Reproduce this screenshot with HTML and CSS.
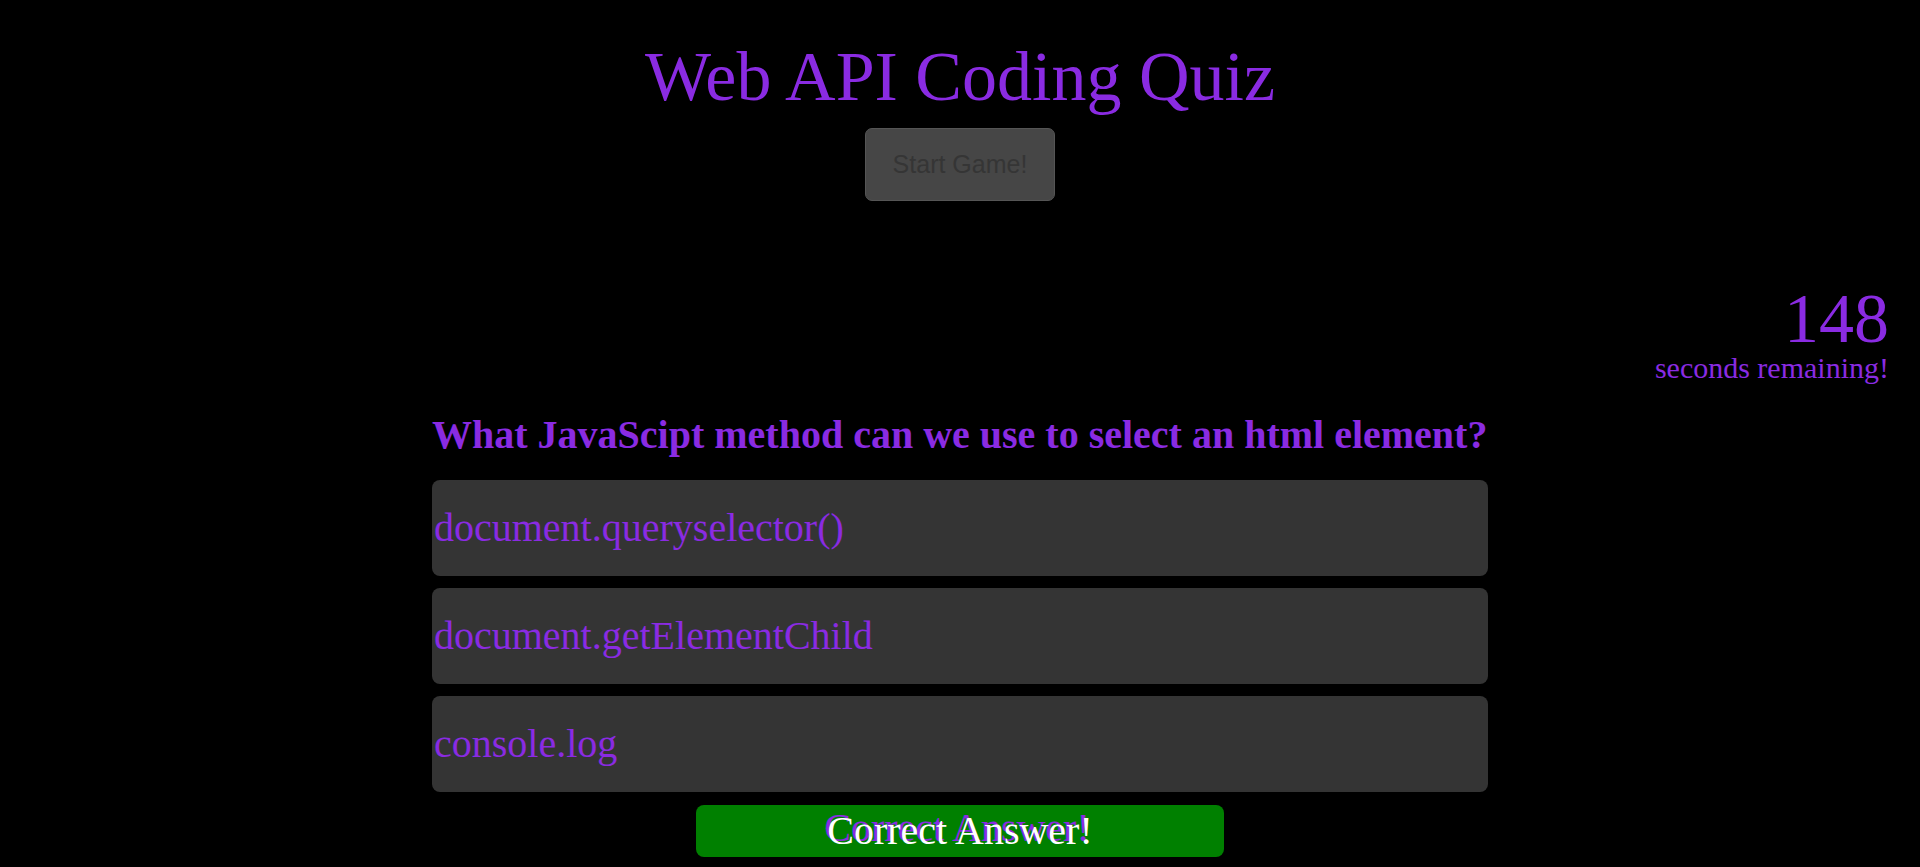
FILE: index.html
```html
<!DOCTYPE html>
<html lang="en">
<head>
<meta charset="utf-8">
<title>Web API Coding Quiz</title>
<link rel="stylesheet" href="styles.css">
</head>
<body>
<header class="header">
  <h1 class="title">Web API Coding Quiz</h1>
  <button class="start-btn" type="button">Start Game!</button>
</header>
<section class="timer">
  <div class="timer-count">148</div>
  <div class="timer-label">seconds remaining!</div>
</section>
<main class="quiz">
  <h2 class="question">What JavaScipt method can we use to select an html element?</h2>
  <div class="answers">
    <button class="answer" type="button">document.queryselector()</button>
    <button class="answer" type="button">document.getElementChild</button>
    <button class="answer" type="button">console.log</button>
  </div>
  <div class="feedback">Correct Answer!</div>
</main>
</body>
</html>
```

FILE: styles.css
```css
html, body {
  margin: 0;
  padding: 0;
  background: #000;
}

body {
  font-family: "Liberation Serif", "Times New Roman", serif;
  color: #8a2be2;
}

.header {
  display: flex;
  flex-direction: column;
  align-items: center;
}

.title {
  margin: 37px 0 11px;
  font-size: 70px;
  font-weight: normal;
  line-height: 80px;
  color: #8a2be2;
}

.start-btn {
  font-family: "Liberation Sans", Arial, sans-serif;
  font-size: 25px;
  line-height: 29px;
  padding: 21px 27px;
  color: #353535;
  background: #464646;
  border: 1px solid #555;
  border-radius: 7px;
}

.timer {
  margin-top: 88px;
  padding-right: 31px;
  text-align: right;
}

.timer-count {
  font-size: 70px;
  line-height: 60px;
}

.timer-label {
  font-size: 30px;
  line-height: 38px;
}

.quiz {
  width: 55%;
  margin: 25px auto 0;
}

.question {
  margin: 0 0 22px;
  font-size: 40px;
  line-height: 46px;
  font-weight: bold;
}

.answers {
  display: flex;
  flex-direction: column;
  gap: 12px;
}

.answer {
  display: block;
  width: 100%;
  padding: 25px 2px;
  font-family: "Liberation Serif", "Times New Roman", serif;
  font-size: 40px;
  line-height: 46px;
  text-align: left;
  color: #8a2be2;
  background: #343434;
  border: none;
  border-radius: 8px;
}

.feedback {
  width: 50%;
  margin: 13px auto 0;
  padding: 3px 0;
  font-size: 40px;
  line-height: 46px;
  text-align: center;
  color: #fff;
  background: #008000;
  border-radius: 8px;
  text-shadow: -3px -3px 0 #8a2be2;
}
```
